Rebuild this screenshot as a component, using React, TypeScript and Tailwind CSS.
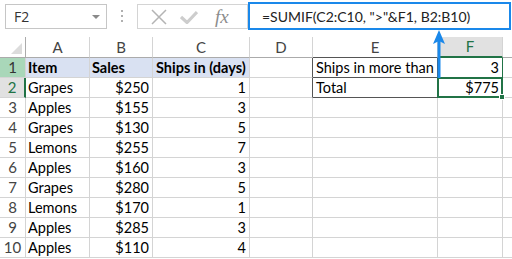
import React from "react";

const rows: [string, string, string][] = [
  ["Grapes", "$250", "1"],
  ["Apples", "$155", "3"],
  ["Grapes", "$130", "5"],
  ["Lemons", "$255", "7"],
  ["Apples", "$160", "3"],
  ["Grapes", "$280", "5"],
  ["Lemons", "$170", "1"],
  ["Apples", "$285", "3"],
  ["Apples", "$110", "4"],
];

const cell = "h-[20px] border-r border-b border-[#d4d4d4] flex items-center overflow-hidden whitespace-nowrap";
const hdr = "border-r border-b border-[#d4d4d4] flex items-center justify-center text-[#444]";

function Toolbar() {
  return (
    <div className="flex h-[37px] items-start font-['Open_Sans',sans-serif]">
      <div className="ml-[5px] mt-[4px] flex h-[25px] w-[102px] items-center justify-between border border-[#c6c6c6] pl-[8px] pr-[6px] text-[14px] text-[#333]">
        <span>F2</span>
        <span className="h-0 w-0 border-x-[4px] border-t-[4px] border-x-transparent border-t-[#8a8a8a]" />
      </div>
      <div className="flex w-[30px] flex-col items-center gap-[3px] pt-[10px]">
        <span className="h-[2px] w-[2px] bg-[#b0b0b0]" />
        <span className="h-[2px] w-[2px] bg-[#b0b0b0]" />
        <span className="h-[2px] w-[2px] bg-[#b0b0b0]" />
      </div>
      <div className="mt-[4px] flex h-[25px] w-[111px] items-center border border-[#d4d4d4] pl-[12px]">
        <svg width="18" height="16" viewBox="0 0 18 16">
          <path d="M2 1 L16 15 M16 1 L2 15" stroke="#b4b4b4" strokeWidth="1.5" fill="none" />
        </svg>
        <svg width="18" height="14" viewBox="0 0 18 14" className="ml-[12px]">
          <path d="M1 7 L7 12.5 L17 2" stroke="#cdcdcd" strokeWidth="3.2" fill="none" />
        </svg>
        <span className="ml-[17px] font-['Liberation_Serif',serif] text-[19px] italic leading-none text-[#8c8c8c]">
          fx
        </span>
      </div>
      <div className="mt-[2px] flex h-[28px] w-[263px] items-center border-2 border-[#1a88ea] pl-[12px] font-['Lato',sans-serif] text-[14px] text-[#222]">
        =SUMIF(C2:C10, "&gt;"&amp;F1, B2:B10)
      </div>
    </div>
  );
}

export default function App() {
  const cols = ["A", "B", "C", "D", "E", "F"];
  return (
    <div className="relative h-[259px] w-[512px] overflow-hidden bg-white text-[14.5px] text-black">
      <Toolbar />
      <div className="grid grid-cols-[26px_64px_63px_97px_63px_125px_65px_9px] font-['Lato',sans-serif]">
        {/* column header row */}
        <div className="relative h-[21px] border-r border-b border-[#ababab]">
          <span className="absolute bottom-[3px] right-[3px] h-0 w-0 border-b-[11px] border-l-[11px] border-b-[#dcdcdc] border-l-transparent" />
        </div>
        {cols.map((c) =>
          c === "F" ? (
            <div key={c} className="h-[21px] border-r border-b-2 border-r-[#d4d4d4] border-b-[#217346] bg-[#e1e1e1] flex items-center justify-center text-[15px] text-[#217346]">
              {c}
            </div>
          ) : (
            <div key={c} className={`${hdr} h-[21px] text-[15px] ${c === "E" ? "border-b-[#555]" : "border-b-[#ababab]"}`}>
              {c}
            </div>
          )
        )}
        <div className="h-[21px] border-b border-[#ababab]" />

        {/* row 1 */}
        <div className="h-[20px] border-r border-b border-[#d4d4d4] bg-[#a9d7b9] flex items-center justify-center text-[15px] text-[#333]">1</div>
        <div className={`${cell} bg-[#d9e1f2] pl-[2px] font-bold`}>Item</div>
        <div className={`${cell} bg-[#d9e1f2] pl-[2px] font-bold`}>Sales</div>
        <div className={`${cell} bg-[#d9e1f2] pl-[3px] font-bold`}>Ships in (days)</div>
        <div className={`${cell} border-r-[#555]`} />
        <div className={`${cell} border-r-[#555] border-b-[#555] pl-[3px]`}>Ships in more than</div>
        <div className={`${cell} border-r-[#217346] border-b-[#555] justify-end pr-[3px]`}>3</div>
        <div className={cell.replace("border-r ", "")} />

        {/* row 2 */}
        <div className="h-[20px] border-r-2 border-b border-r-[#217346] border-b-[#d4d4d4] bg-[#e1e1e1] flex items-center justify-center text-[15px] text-[#217346]">2</div>
        <div className={`${cell} pl-[2px]`}>{rows[0][0]}</div>
        <div className={`${cell} justify-end pr-[3px]`}>{rows[0][1]}</div>
        <div className={`${cell} justify-end pr-[3px]`}>{rows[0][2]}</div>
        <div className={`${cell} border-r-[#555]`} />
        <div className={`${cell} border-r-[#555] border-b-[#555] pl-[3px]`}>Total</div>
        <div className={`${cell} relative overflow-visible justify-end pr-[3px]`}>
          $775
          <span className="pointer-events-none absolute -left-[1px] -top-[1px] h-[21px] w-[66px] border-2 border-[#217346]" />
          <span className="absolute -bottom-[3px] -right-[3px] h-[6px] w-[6px] border border-white bg-[#217346]" />
        </div>
        <div className={cell.replace("border-r ", "")} />

        {/* rows 3-10 */}
        {rows.slice(1).map((r, i) => (
          <React.Fragment key={i}>
            <div className="h-[20px] border-r border-b border-[#d4d4d4] flex items-center justify-center text-[15px] text-[#444]">{i + 3}</div>
            <div className={`${cell} pl-[2px]`}>{r[0]}</div>
            <div className={`${cell} justify-end pr-[3px]`}>{r[1]}</div>
            <div className={`${cell} justify-end pr-[3px]`}>{r[2]}</div>
            <div className={cell} />
            <div className={cell} />
            <div className={cell} />
            <div className={cell.replace("border-r ", "")} />
          </React.Fragment>
        ))}
      </div>

      {/* blue arrow pointing at the formula bar */}
      <svg className="absolute left-[431px] top-[29px]" width="16" height="49" viewBox="0 0 16 49">
        <path d="M8 10 L8 49" stroke="#1a88ea" strokeWidth="3" />
        <path d="M8 1 L2 15 L8 12 L14 15 Z" fill="#1a88ea" />
      </svg>
    </div>
  );
}
